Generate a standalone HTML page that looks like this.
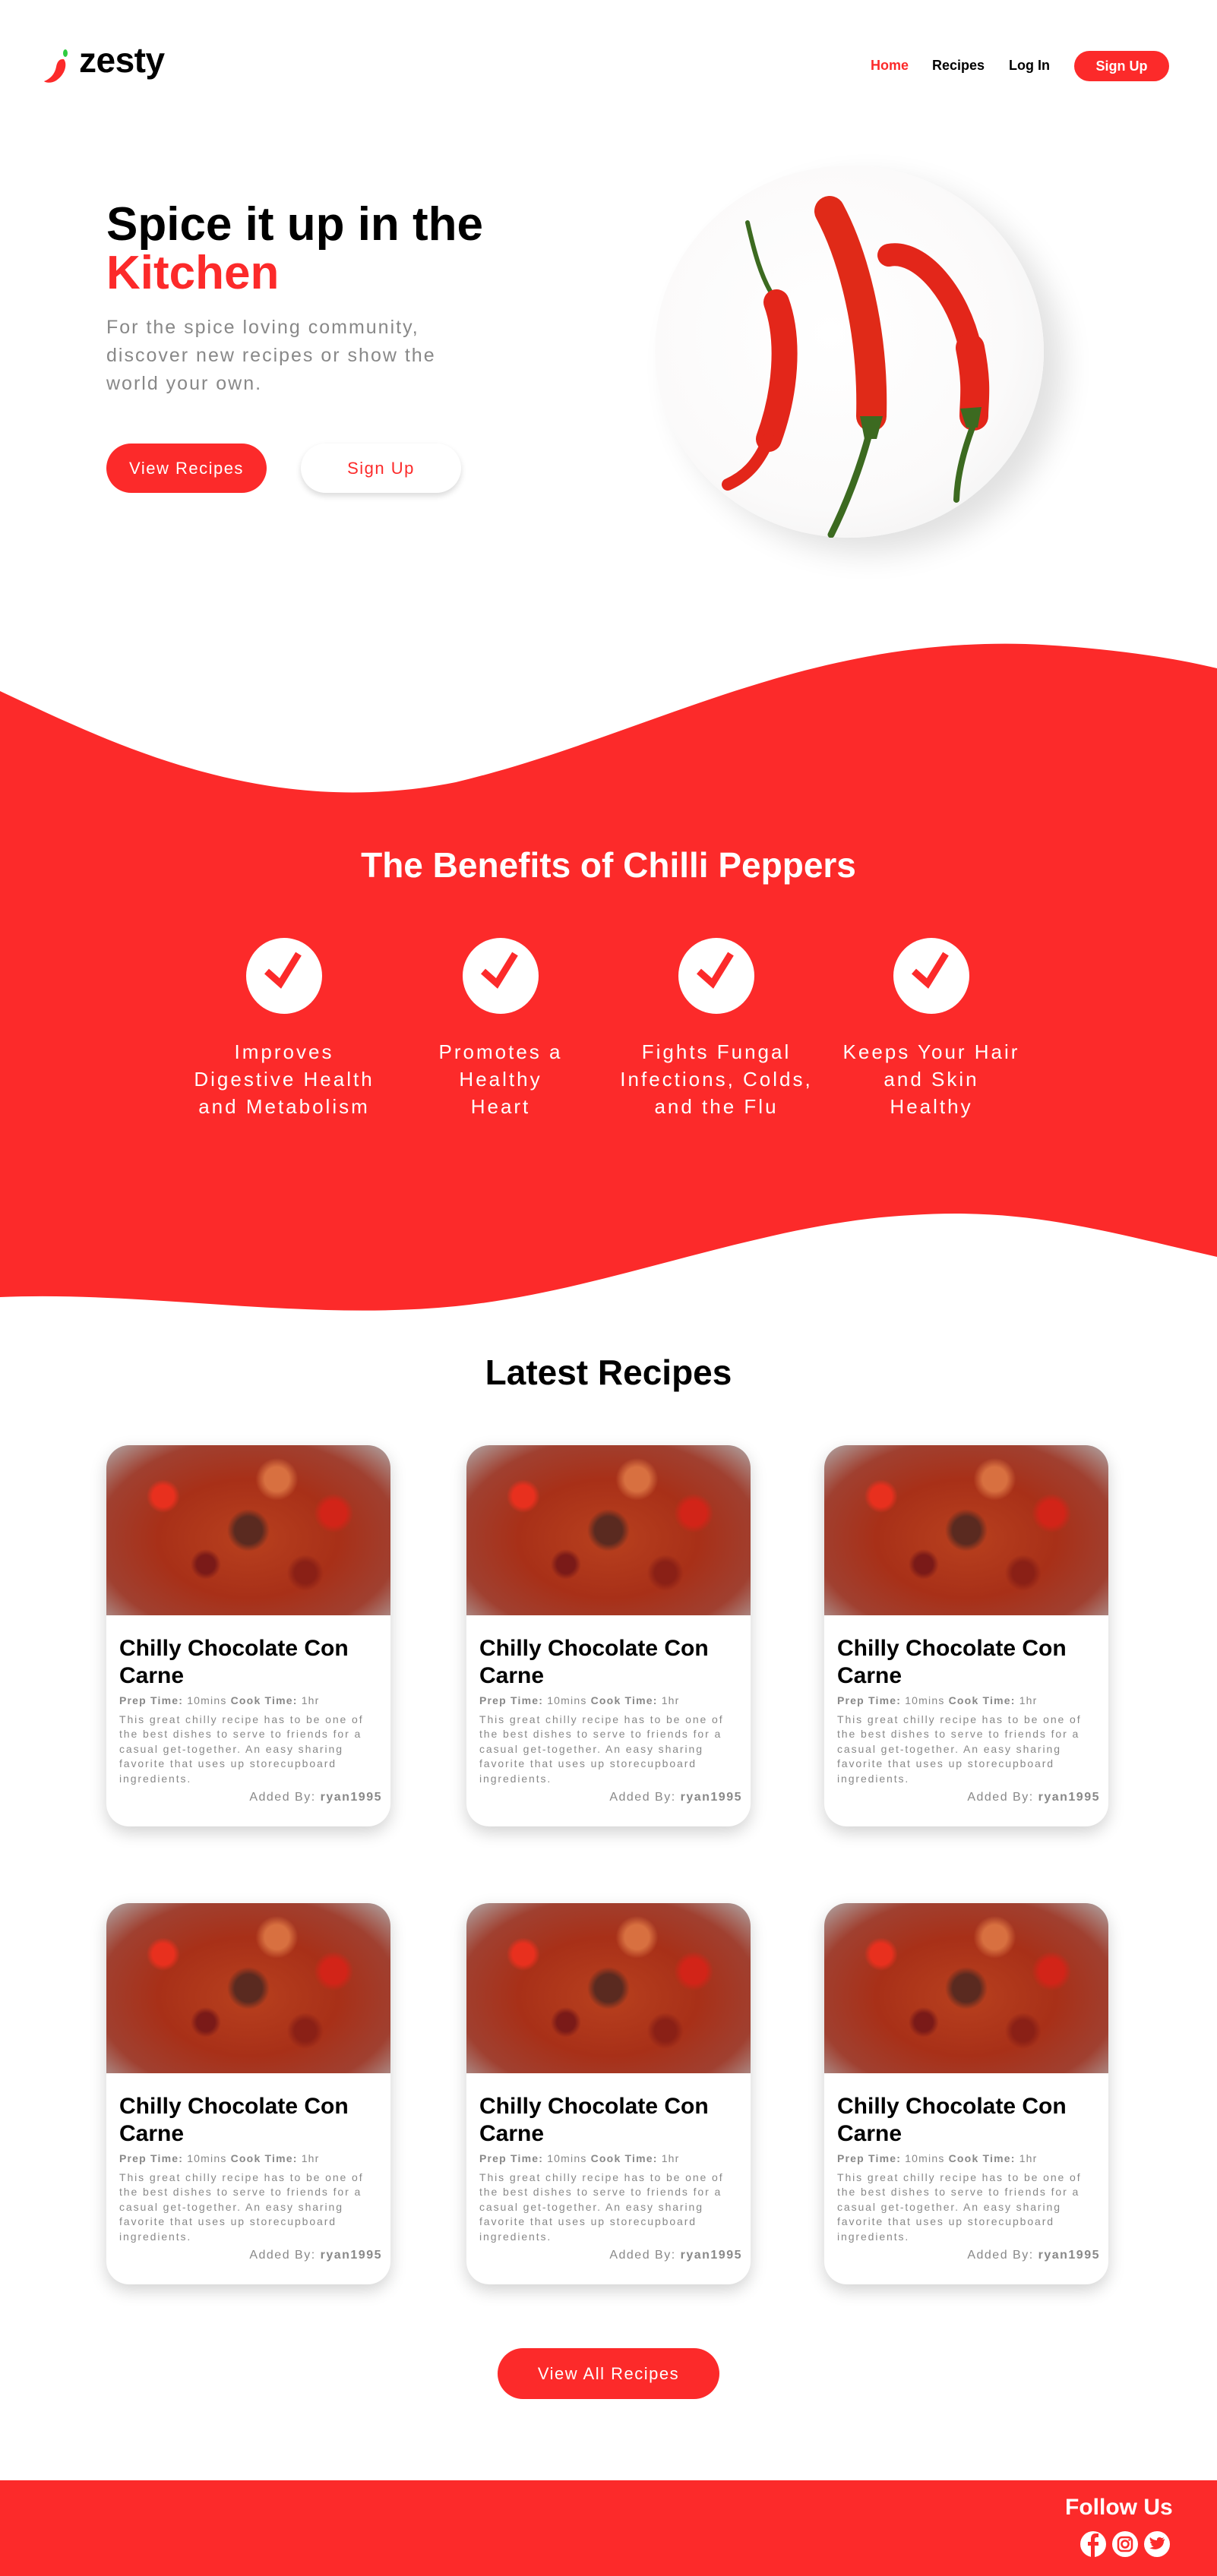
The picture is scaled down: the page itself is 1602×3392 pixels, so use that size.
<!DOCTYPE html>
<html><head><meta charset="utf-8"><style>
*{margin:0;padding:0;box-sizing:border-box}
body{width:1602px;height:3392px;position:relative;background:#fff;font-family:"Liberation Sans",sans-serif;overflow:hidden}
.abs{position:absolute}
.red{color:#fc2a2a}
.nav a{position:absolute;top:76px;font-size:18px;font-weight:bold;color:#000;text-decoration:none}
.btn{position:absolute;border-radius:34px;text-align:center;font-size:22px;letter-spacing:1.5px}
.benefit{position:absolute;width:280px;text-align:center;color:#fff;font-size:26px;letter-spacing:3px;line-height:36px;top:1367px}
.circ{position:absolute;width:100px;height:100px;border-radius:50%;background:#fff;top:1235px}
.card{position:absolute;width:374px;height:502px;border-radius:30px;background:#fff;box-shadow:0 8px 22px rgba(0,0,0,.18);overflow:hidden}
.card .img{height:224px;background:
radial-gradient(circle at 50% 50%,#5a2a20 0 18px,transparent 28px),
radial-gradient(circle at 20% 30%,#e8301e 0 14px,transparent 22px),
radial-gradient(circle at 80% 40%,#d22418 0 16px,transparent 26px),
radial-gradient(circle at 35% 70%,#7a1a18 0 12px,transparent 20px),
radial-gradient(circle at 70% 75%,#8a2016 0 14px,transparent 24px),
radial-gradient(circle at 60% 20%,#d87040 0 16px,transparent 28px),
radial-gradient(ellipse at 50% 55%,#b8401e 0%,#a83018 45%,#a04030 75%,#b0a8a8 100%)}
.card h3{position:absolute;left:17px;top:250px;font-size:30px;line-height:36px;font-weight:bold;color:#000}
.card .t{position:absolute;left:17px;top:328px;font-size:14px;color:#888;letter-spacing:1.2px}
.card .d{position:absolute;left:17px;top:352px;width:340px;font-size:14px;line-height:19.4px;color:#888;letter-spacing:1.9px}
.card .a{position:absolute;right:11px;top:455px;font-size:16px;color:#888;letter-spacing:1.5px}
</style></head><body>

<svg class="abs" style="left:56px;top:62px" width="44" height="50" viewBox="0 0 44 50"><path d="M28 16 C33 22 30 36 18 44 C12 48 4 47 2 45 C10 42 16 36 18 26 C19 20 22 15 28 16Z" fill="#fc2a2a"/><ellipse cx="30" cy="8" rx="3" ry="5" fill="#2ecc40"/></svg>
<div class="abs" style="left:104px;top:52px;font-size:46px;font-weight:bold;letter-spacing:-0.5px">zesty</div>

<div class="nav">
<a style="left:1146px;color:#fc2a2a">Home</a>
<a style="left:1227px">Recipes</a>
<a style="left:1328px">Log In</a>
</div>
<div class="btn" style="left:1414px;top:67px;width:125px;height:40px;background:#fc2a2a;color:#fff;font-size:18px;font-weight:bold;line-height:40px;letter-spacing:0">Sign Up</div>

<div class="abs" style="left:140px;top:264px;font-size:62px;font-weight:bold;line-height:64px">Spice it up in the<br><span class="red">Kitchen</span></div>
<div class="abs" style="left:140px;top:413px;font-size:25px;line-height:37px;color:#888;letter-spacing:2px;width:500px">For the spice loving community, discover new recipes or show the world your own.</div>
<div class="btn" style="left:140px;top:584px;width:211px;height:65px;line-height:65px;background:#fc2a2a;color:#fff">View Recipes</div>
<div class="btn" style="left:396px;top:584px;width:211px;height:65px;line-height:65px;background:#fff;color:#fc2a2a;box-shadow:0 4px 8px rgba(0,0,0,.15)">Sign Up</div>

<div class="abs" style="left:862px;top:218px;width:512px;height:490px;border-radius:50%;background:radial-gradient(ellipse at 45% 45%,#fff 0%,#fbfafa 60%,#ececec 100%);box-shadow:25px 20px 40px rgba(0,0,0,.12)"></div>
<svg class="abs" style="left:862px;top:218px" width="512" height="490" viewBox="0 0 512 490">
<g fill="none" stroke-linecap="round">
<path d="M122 75 C130 110 140 150 158 175" stroke="#3c6a20" stroke-width="6"/>
<path d="M160 180 C178 230 172 300 150 360" stroke="#e3261a" stroke-width="34"/>
<path d="M150 360 C135 395 118 410 96 420" stroke="#e3261a" stroke-width="16"/>
<path d="M230 60 C262 120 288 220 285 330" stroke="#e02a18" stroke-width="40"/>
<path d="M283 350 C270 400 250 450 232 486" stroke="#3c6a20" stroke-width="9"/>
<path d="M308 118 C350 110 400 170 415 240" stroke="#e3261a" stroke-width="30"/>
<path d="M415 240 C425 290 420 310 420 330" stroke="#e3261a" stroke-width="38"/>
<path d="M418 345 C405 380 398 410 397 440" stroke="#3c6a20" stroke-width="8"/>
</g>
<path d="M402 320 L430 318 L425 345 L410 345Z" fill="#3c6a20"/>
<path d="M270 330 L300 330 L292 360 L276 360Z" fill="#3c6a20"/>
</svg>

<svg class="abs" style="left:0;top:840px" width="1602" height="900" viewBox="0 0 1602 900">
<path d="M0 70 C150 140 350 240 600 190 C850 130 1050 0 1350 8 C1450 12 1540 25 1602 40 L1602 815 C1450 780 1350 750 1200 760 C1000 770 800 860 600 880 C400 900 200 860 0 868Z" fill="#fc2a2a"/>
</svg>
<div class="abs" style="left:0;width:1602px;top:1112px;text-align:center;color:#fff;font-size:46px;font-weight:bold">The Benefits of Chilli Peppers</div>

<div class="circ" style="left:324px"></div>
<div class="circ" style="left:609px"></div>
<div class="circ" style="left:893px"></div>
<div class="circ" style="left:1176px"></div>
<svg class="abs" style="left:0;top:1235px" width="1602" height="100">
<g fill="none" stroke="#fc2a2a" stroke-width="9">
<path d="M351 44 L369 60 L393 21"/><path d="M636 44 L654 60 L678 21"/><path d="M920 44 L938 60 L962 21"/><path d="M1203 44 L1221 60 L1245 21"/>
</g></svg>
<div class="benefit" style="left:234px">Improves<br>Digestive Health<br>and Metabolism</div>
<div class="benefit" style="left:519px">Promotes a<br>Healthy<br>Heart</div>
<div class="benefit" style="left:803px">Fights Fungal<br>Infections, Colds,<br>and the Flu</div>
<div class="benefit" style="left:1086px">Keeps Your Hair<br>and Skin<br>Healthy</div>

<div class="abs" style="left:0;width:1602px;top:1780px;text-align:center;font-size:46px;font-weight:bold">Latest Recipes</div>

<div class="card" style="left:140px;top:1903px"><div class="img"></div><h3>Chilly Chocolate Con Carne</h3><div class="t"><b>Prep Time:</b> 10mins <b>Cook Time:</b> 1hr</div><div class="d">This great chilly recipe has to be one of the best dishes to serve to friends for a casual get-together. An easy sharing favorite that uses up storecupboard ingredients.</div><div class="a">Added By: <b>ryan1995</b></div></div>
<div class="card" style="left:614px;top:1903px"><div class="img"></div><h3>Chilly Chocolate Con Carne</h3><div class="t"><b>Prep Time:</b> 10mins <b>Cook Time:</b> 1hr</div><div class="d">This great chilly recipe has to be one of the best dishes to serve to friends for a casual get-together. An easy sharing favorite that uses up storecupboard ingredients.</div><div class="a">Added By: <b>ryan1995</b></div></div>
<div class="card" style="left:1085px;top:1903px"><div class="img"></div><h3>Chilly Chocolate Con Carne</h3><div class="t"><b>Prep Time:</b> 10mins <b>Cook Time:</b> 1hr</div><div class="d">This great chilly recipe has to be one of the best dishes to serve to friends for a casual get-together. An easy sharing favorite that uses up storecupboard ingredients.</div><div class="a">Added By: <b>ryan1995</b></div></div>
<div class="card" style="left:140px;top:2506px"><div class="img"></div><h3>Chilly Chocolate Con Carne</h3><div class="t"><b>Prep Time:</b> 10mins <b>Cook Time:</b> 1hr</div><div class="d">This great chilly recipe has to be one of the best dishes to serve to friends for a casual get-together. An easy sharing favorite that uses up storecupboard ingredients.</div><div class="a">Added By: <b>ryan1995</b></div></div>
<div class="card" style="left:614px;top:2506px"><div class="img"></div><h3>Chilly Chocolate Con Carne</h3><div class="t"><b>Prep Time:</b> 10mins <b>Cook Time:</b> 1hr</div><div class="d">This great chilly recipe has to be one of the best dishes to serve to friends for a casual get-together. An easy sharing favorite that uses up storecupboard ingredients.</div><div class="a">Added By: <b>ryan1995</b></div></div>
<div class="card" style="left:1085px;top:2506px"><div class="img"></div><h3>Chilly Chocolate Con Carne</h3><div class="t"><b>Prep Time:</b> 10mins <b>Cook Time:</b> 1hr</div><div class="d">This great chilly recipe has to be one of the best dishes to serve to friends for a casual get-together. An easy sharing favorite that uses up storecupboard ingredients.</div><div class="a">Added By: <b>ryan1995</b></div></div>

<div class="btn" style="left:655px;top:3092px;width:292px;height:67px;line-height:67px;background:#fc2a2a;color:#fff">View All Recipes</div>

<div class="abs" style="left:0;top:3266px;width:1602px;height:126px;background:#fc2a2a"></div>
<div class="abs" style="left:1402px;top:3285px;color:#fff;font-size:30px;font-weight:bold">Follow Us</div>
<svg class="abs" style="left:1420px;top:3332px" width="124" height="36" viewBox="0 0 124 36">
<circle cx="19" cy="18" r="17" fill="#fff"/><path d="M21 35 V20 H26 V15 H21 V12 C21 10 22 9 24 9 H26 V4 H22 C18 4 16 7 16 11 V15 H12 V20 H16 V35Z" fill="#fc2a2a"/>
<circle cx="61" cy="18" r="17" fill="#fff"/><rect x="52" y="9" width="18" height="18" rx="5" fill="none" stroke="#fc2a2a" stroke-width="2.5"/><circle cx="61" cy="18" r="4.5" fill="none" stroke="#fc2a2a" stroke-width="2.5"/><circle cx="66.5" cy="12.5" r="1.3" fill="#fc2a2a"/>
<circle cx="103" cy="18" r="17" fill="#fff"/><path d="M113 11 C112 12 111 12 110 12 C111 11 112 10 112 9 C111 10 110 10 109 10 C107 8 103 9 103 12 V13 C99 13 96 11 94 9 C93 11 94 14 96 15 C95 15 94 15 94 14 C94 16 95 18 97 18 C96 18 95 19 95 18 C96 20 97 21 99 21 C97 22 95 23 93 23 C103 28 112 22 112 14 C113 13 113 12 113 11Z" fill="#fc2a2a"/>
</svg>
</body></html>
